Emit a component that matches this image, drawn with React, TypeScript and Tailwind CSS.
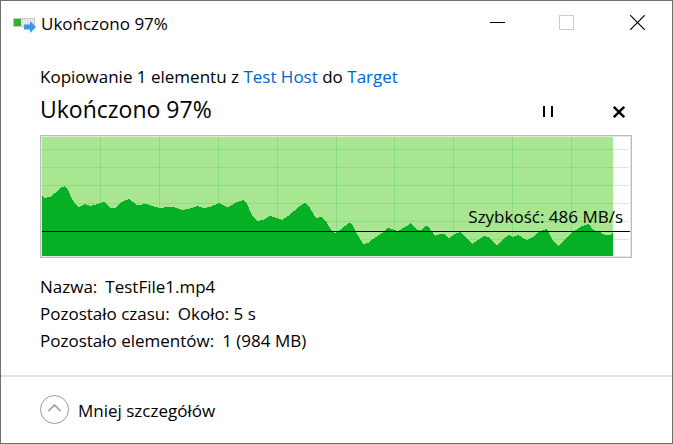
import React, { useId, useState } from "react";

interface Detail {
  label: string;
  value: string;
}

interface SpeedChartProps {
  progress: number;
  speed: string;
}

const details: Detail[] = [
  { label: "Nazwa:", value: "TestFile1.mp4" },
  { label: "Pozostało czasu:", value: "Około: 5 s" },
  { label: "Pozostało elementów:", value: "1 (984 MB)" },
];

// Chart space is 588 x 119, y grows downwards
const CHART_W = 588;
const CHART_H = 119;
const columns = [58, 117, 176, 235, 294, 352, 411, 470, 529];
const rows = [12, 30, 48, 66, 84, 102];

const samples: [number, number][] = [
  [0, 59], [2, 61], [8, 60], [13, 56], [20, 50], [23, 49], [26, 53], [30, 62], [34, 68], [37, 70],
  [43, 67], [48, 69], [52, 68], [62, 65], [69, 71], [73, 71], [80, 65], [87, 62], [95, 68], [104, 67],
  [113, 70], [118, 71], [125, 70], [131, 70], [140, 73], [146, 72], [155, 69], [161, 71], [168, 70],
  [177, 66], [185, 70], [188, 69], [195, 65], [201, 63], [205, 67], [210, 78], [215, 84], [221, 83],
  [228, 79], [240, 83], [246, 79], [258, 69], [263, 66], [268, 71], [274, 81], [280, 80], [285, 86],
  [289, 93], [293, 96], [298, 93], [307, 86], [310, 87], [314, 95], [321, 107], [326, 106], [331, 102],
  [340, 96], [346, 91], [356, 94], [365, 89], [369, 86], [375, 93], [379, 93], [383, 89], [386, 89],
  [393, 99], [398, 97], [402, 97], [407, 101], [413, 97], [418, 95], [424, 101], [430, 107], [436, 103],
  [442, 99], [446, 100], [455, 108], [461, 102], [467, 98], [471, 100], [476, 98], [485, 103],
  [491, 100], [498, 94], [504, 92], [506, 94], [511, 104], [516, 109], [521, 104], [531, 95], [540, 89],
  [547, 87], [551, 93], [558, 95], [563, 98], [568, 98], [571, 96],
];

const area = `M0 ${CHART_H} L${samples.map(([x, y]) => `${x} ${y}`).join(" L")} L571 ${CHART_H} Z`;

const SpeedChart: React.FC<SpeedChartProps> = ({ progress, speed }) => {
  const done = Math.round((CHART_W * progress) / 100) + 1;

  return (
    <div className="relative border border-[#bcbcbc]">
      <div className="border border-[#e6e6e6]">
        <svg
          className="block h-[119px] w-full"
          viewBox={`0 0 ${CHART_W} ${CHART_H}`}
          preserveAspectRatio="none"
          shapeRendering="crispEdges"
          aria-hidden="true"
        >
          {rows.map((y) => (
            <rect key={y} x="0" y={y} width={CHART_W - 1} height="1" fill="#cdeeda" />
          ))}
          <rect x="0" y="0" width={done} height={CHART_H} fill="#a8e692" />
          {rows.map((y) => (
            <rect key={y} x="0" y={y} width={done} height="1" fill="#8cdd7c" />
          ))}
          {columns.map((x) => (
            <rect key={x} x={x} y="0" width="1" height={CHART_H} fill="#8cdd7c" />
          ))}
          <path d={area} fill="#06b025" />
          <rect x="0" y="94" width={CHART_W} height="1" fill="#000" />
        </svg>
      </div>
      <span className="absolute right-2 bottom-[28px] text-[17px] leading-6">Szybkość: {speed}</span>
    </div>
  );
};

const CopyIcon: React.FC = () => (
  <svg className="h-5 w-6 shrink-0" viewBox="0 0 24 20" aria-hidden="true">
    <rect x="0.5" y="5.5" width="21" height="8" fill="#e6e6e6" stroke="#c9c9c9" />
    <rect x="1" y="6" width="7" height="7" fill="#30b030" />
    <path d="M11 11.5h6V8l6 6-6 6v-3.5h-6z" fill="#3a96e8" />
  </svg>
);

export default function App() {
  const [paused, setPaused] = useState(false);
  const [expanded, setExpanded] = useState(true);
  const detailsId = useId();
  const title = "Ukończono 97%";

  return (
    <div className="flex min-h-screen w-full flex-col border border-[#6f6f6f] bg-white font-['Open_Sans','Noto_Sans',sans-serif] text-[17px] leading-[27px] text-black">
      <header className="flex h-[44px] items-center">
        <div className="flex min-w-0 flex-1 items-center gap-1 pl-3">
          <CopyIcon />
          <span className="truncate">{title}</span>
        </div>
        <button type="button" aria-label="Minimalizuj" className="flex h-full w-[70px] items-center justify-center">
          <svg className="h-4 w-4" viewBox="0 0 16 16" shapeRendering="crispEdges">
            <rect x="1" y="7" width="15" height="1" />
          </svg>
        </button>
        <button type="button" aria-label="Maksymalizuj" disabled className="flex h-full w-[70px] items-center justify-center">
          <svg className="h-4 w-4" viewBox="0 0 16 16">
            <rect x="0.5" y="0.5" width="14" height="14" fill="none" stroke="#cccccc" />
          </svg>
        </button>
        <button type="button" aria-label="Zamknij" className="flex h-full w-[70px] items-center justify-center">
          <svg className="h-4 w-4" viewBox="0 0 16 16">
            <path d="M1.2 0.2l14.6 14.6M15.8 0.2L1.2 14.8" stroke="#000" strokeWidth="1.2" />
          </svg>
        </button>
      </header>

      <main className="flex-1 pt-[18px] pr-10 pl-[39px]">
        <p>
          Kopiowanie 1 elementu z <a href="#source" className="text-[#0066cc]">Test Host</a> do{" "}
          <a href="#target" className="text-[#0066cc]">Target</a>
        </p>
        <div className="mb-[7px] flex items-end">
          <h1 className="flex-1 text-[23px] leading-[38px]">{title}</h1>
          <button
            type="button"
            aria-label="Wstrzymaj"
            aria-pressed={paused}
            onClick={() => setPaused(!paused)}
            className="mr-11 flex h-8 w-7 items-center justify-center"
          >
            <svg className="h-3 w-3" viewBox="0 0 12 12" shapeRendering="crispEdges">
              <rect x="1" y="0" width="2" height="11" />
              <rect x="9" y="0" width="2" height="11" />
            </svg>
          </button>
          <button type="button" aria-label="Anuluj" className="flex h-8 w-[26px] items-center justify-center">
            <svg className="h-3 w-3" viewBox="0 0 12 12">
              <path d="M0.8 0.8l10.4 10.4M11.2 0.8L0.8 11.2" stroke="#000" strokeWidth="2.3" />
            </svg>
          </button>
        </div>

        <SpeedChart progress={97} speed="486 MB/s" />

        {expanded && (
          <dl id={detailsId} className="pt-[15px] pb-5">
            {details.map(({ label, value }) => (
              <div key={label} className="flex gap-2">
                <dt>{label}</dt>
                <dd>{value}</dd>
              </div>
            ))}
          </dl>
        )}
      </main>

      <footer className="border-t-2 border-[#e1e1e1] px-[39px] pt-[18px] pb-[18px]">
        <button
          type="button"
          aria-expanded={expanded}
          aria-controls={detailsId}
          onClick={() => setExpanded(!expanded)}
          className="flex items-center gap-2"
        >
          <svg className={expanded ? "h-[30px] w-[30px]" : "h-[30px] w-[30px] rotate-180"} viewBox="0 0 30 30" fill="none">
            <circle cx="14.5" cy="14.5" r="14" stroke="#999999" />
            <path d="M8.3 16.2l6.2-6.2 6.2 6.2" stroke="#a6a6a6" strokeWidth="1.8" />
          </svg>
          <span>{expanded ? "Mniej szczegółów" : "Więcej szczegółów"}</span>
        </button>
      </footer>
    </div>
  );
}
